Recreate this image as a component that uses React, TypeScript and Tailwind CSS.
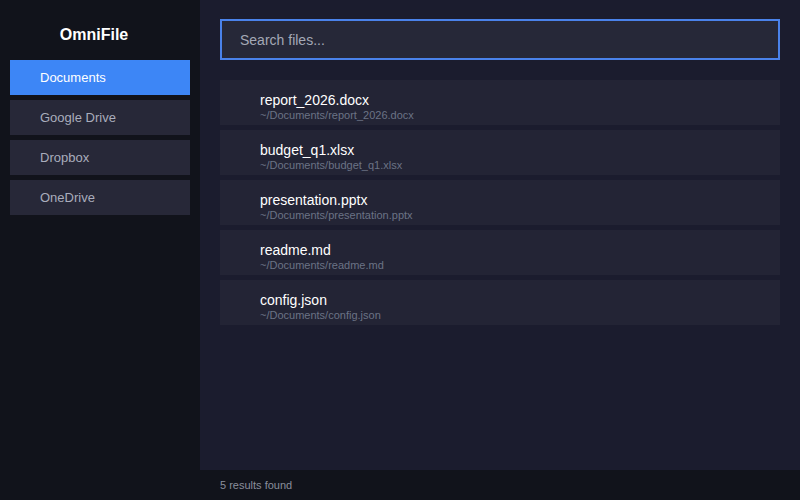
import { useState } from "react";

const sources = ["Documents", "Google Drive", "Dropbox", "OneDrive"];

const files = [
  { name: "report_2026.docx", path: "~/Documents/report_2026.docx" },
  { name: "budget_q1.xlsx", path: "~/Documents/budget_q1.xlsx" },
  { name: "presentation.pptx", path: "~/Documents/presentation.pptx" },
  { name: "readme.md", path: "~/Documents/readme.md" },
  { name: "config.json", path: "~/Documents/config.json" },
];

const App = () => {
  const [active, setActive] = useState("Documents");
  const [query, setQuery] = useState("");

  const results = files.filter((f) => f.name.toLowerCase().includes(query.toLowerCase()));

  return (
    <div className="flex h-[500px] w-[800px] bg-[#11131b] font-['Liberation_Sans',Arial,sans-serif]">
      <aside className="flex w-[200px] shrink-0 flex-col gap-[5px] px-[10px] pt-[24px]">
        <h1 className="mb-[9px] pr-[12px] text-center text-[16px] font-bold leading-[22px] text-white">OmniFile</h1>
        {sources.map((s) => (
          <button
            key={s}
            onClick={() => setActive(s)}
            className={`h-[35px] pl-[30px] text-left text-[13px] ${
              active === s ? "bg-[#3d86f6] text-white" : "bg-[#272838] text-[#a9adbc]"
            }`}
          >
            {s}
          </button>
        ))}
      </aside>

      <div className="flex flex-1 flex-col">
        <main className="flex flex-1 flex-col bg-[#1b1c2e] px-[20px] pt-[19px]">
          <input
            value={query}
            onChange={(e) => setQuery(e.target.value)}
            placeholder="Search files..."
            className="h-[41px] w-full border-2 border-[#4a82ea] bg-[#262838] px-[18px] text-[14px] text-white outline-none placeholder:text-[#a4a8b6]"
          />
          <ul className="mt-[20px] flex flex-col gap-[5px]">
            {results.map((f) => (
              <li key={f.name} className="flex h-[45px] flex-col bg-[#232435] pl-[40px] pt-[12px]">
                <span className="text-[14px] leading-[17px] text-white">{f.name}</span>
                <span className="text-[11px] leading-[13px] text-[#6b7385]">{f.path}</span>
              </li>
            ))}
          </ul>
        </main>
        <footer className="flex h-[30px] items-center bg-[#11131b] px-[20px] text-[11px] text-[#8a8e9c]">
          {results.length} results found
        </footer>
      </div>
    </div>
  );
};

export default App;
